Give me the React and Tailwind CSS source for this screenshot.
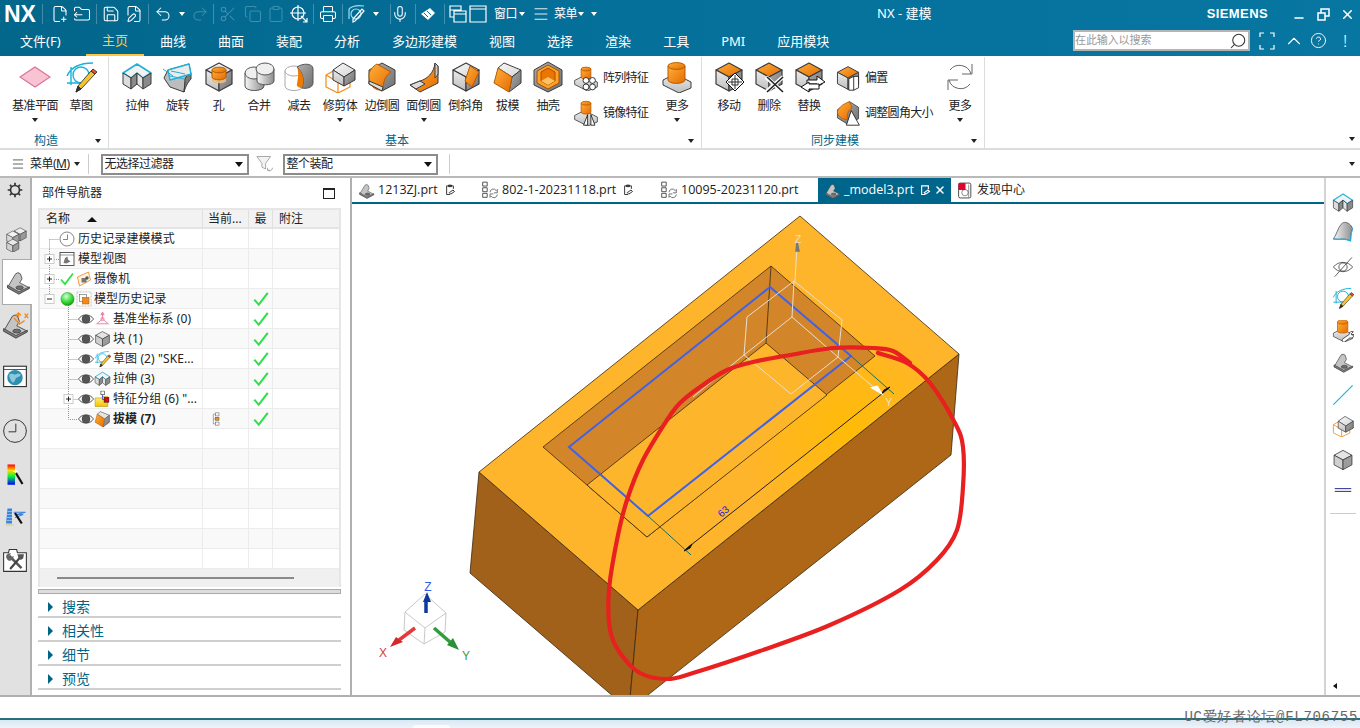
import { FilePlus2, FolderOutput, Save, FilePen, Undo2, Redo2, Scissors, Copy, Clipboard, Printer, Mic, Menu, Search, ChevronUp, CircleHelp, X, Minus } from "lucide-react";

const CJK = "font-['Noto_Sans','Noto_Sans_CJK_SC',sans-serif]";

function Defs() {
  return <svg className="block h-0 w-0">
      <defs>
        <linearGradient id="gt" x1="0" y1="0" x2="1" y2="1"><stop offset="0" stopColor="#fafafa" /><stop offset="1" stopColor="#d4d4d4" /></linearGradient>
        <linearGradient id="gl" x1="0" y1="0" x2="0" y2="1"><stop offset="0" stopColor="#ececec" /><stop offset="1" stopColor="#bdbdbd" /></linearGradient>
        <linearGradient id="gr" x1="0" y1="0" x2="1" y2="1"><stop offset="0" stopColor="#b0b0b0" /><stop offset="1" stopColor="#6f6f6f" /></linearGradient>
        <linearGradient id="og" x1="0" y1="0" x2="1" y2="1"><stop offset="0" stopColor="#ffb03a" /><stop offset="1" stopColor="#e66a00" /></linearGradient>
        <linearGradient id="cy" x1="0" y1="0" x2="1" y2="0"><stop offset="0" stopColor="#f7f7f7" /><stop offset="1" stopColor="#8c8c8c" /></linearGradient>
        <linearGradient id="rb" x1="0" y1="0" x2="0" y2="1"><stop offset="0" stopColor="#f00" /><stop offset=".3" stopColor="#fd0" /><stop offset=".6" stopColor="#0e4" /><stop offset="1" stopColor="#00f" /></linearGradient>
        <radialGradient id="ball" cx=".4" cy=".3" r=".8"><stop offset="0" stopColor="#d4ffd4" /><stop offset=".5" stopColor="#3fe03f" /><stop offset="1" stopColor="#0a8a0a" /></radialGradient>
        <linearGradient id="fold" x1="0" y1="0" x2="0" y2="1"><stop offset="0" stopColor="#fff48a" /><stop offset="1" stopColor="#f5c400" /></linearGradient>
        <radialGradient id="topface" gradientUnits="userSpaceOnUse" cx="850" cy="430" r="110"><stop offset="0" stopColor="#ffbb08" /><stop offset="1" stopColor="#ffb52b" /></radialGradient>
      </defs>
    </svg>;
}

const G = "#3c3c3c";
const cube = (top = "url(#gt)", left = "url(#gl)", right = "url(#gr)") => <g stroke={G} strokeWidth="1.2" strokeLinejoin="round">
    <path d="M3 9 16 2l13 7-13 7z" fill={top} />
    <path d="M3 9l13 7v14L3 23z" fill={left} />
    <path d="M29 9 16 16v14l13-7z" fill={right} />
  </g>;
const cyl = (x, y, w, h, fill = "url(#og)", stroke = "#b85a00") => <g stroke={stroke} strokeWidth="1">
    <path d={`M${x} ${y}v${h}a${w / 2} ${w / 5} 0 0 0 ${w} 0v-${h}z`} fill={fill} />
    <ellipse cx={x + w / 2} cy={y} rx={w / 2} ry={w / 5} fill={fill} />
  </g>;
const plate = <path d="M2 19l12-6 16 8v6l-12 5-16-8z" fill="url(#gl)" stroke={G} />;
const pencil = <g stroke="#222" strokeWidth=".8"><path d="M11 31l2-6L26 10l4 3-14 15z" fill="#f6c431" /><path d="M26 10l2-2 4 3-2 2z" fill="#e8523c" /><path d="M11 31l2-6 3 3z" fill="#333" /></g>;
const sketchBase = <g fill="none" stroke="#18b0dc" strokeWidth="1.4"><path d="M2 15c4-9 14-13 26-13M6 6v18M2 22h18" /><circle cx="16" cy="14" r="8" /></g>;
const extrude = <g stroke={G} strokeLinejoin="round">
    <path d="M2 12 16 3l14 9-8 5-6-5-6 5z" fill="#f2f2f2" stroke="#21b0d8" strokeWidth="1.6" />
    <path d="M2 12l8 5v11l-8-5z" fill="#dcdcdc" />
    <path d="M10 17l6-5v11l-6 5z" fill="#8a8a8a" />
    <path d="M16 12l6 5v11l-6-5z" fill="#e4e4e4" />
    <path d="M22 17l8-5v11l-8 5z" fill="#8a8a8a" />
  </g>;
const bracket = <g stroke="#444" strokeLinejoin="round">
    <path d="M3 23 13 6q3-3 6 0l2 6-3 5 12 6-13 7z" fill="#c4c4c4" />
    <path d="M3 23l14 8 13-7v-2L17 28 3 20z" fill="#7e7e7e" />
    <ellipse cx="18" cy="23" rx="4.5" ry="2.2" fill="#6f6f6f" />
  </g>;

const ICONS = {
  plane: <path d="M1 16 16 6l15 10-15 10z" fill="#f8c4d4" stroke="#dc7396" strokeWidth="1.2" />,
  sketch: <g>{sketchBase}{pencil}</g>,
  extrude,
  revolve: <g stroke={G} strokeLinejoin="round"><path d="M6 9 27 3l2 10-6 8-1 10-14-5-6-9z" fill="#bdbdbd" /><path d="M23 21c-1-4 2-7 6-8v5c-2 2-5 6-7 13z" fill="#7a7a7a" /><path d="M6 9l21-6 2 10-21 6z" fill="#ececec" stroke="#21b0d8" strokeWidth="1.4" /><path d="M1 8l10 7M9 10l14 3M8 15l14 3" stroke="#21b0d8" fill="none" /></g>,
  hole: <g>{cube()}<path d="M9 9v11c0 3 14 3 14 0V9" fill="#e8bd84" opacity=".9" />{cyl(9, 9, 14, 7)}</g>,
  unite: <g stroke="#555"><path d="M2 12v13c0 6 19 6 19 0V12z" fill="url(#cy)" /><ellipse cx="11" cy="12" rx="9" ry="6" fill="#efefef" /><path d="M14 8v12c0 5 17 5 17 0V8z" fill="url(#cy)" /><ellipse cx="22" cy="8" rx="9" ry="6" fill="#efefef" /></g>,
  subtract: <g><path d="M2 10v15c0 6 18 6 18 0V10" fill="#fff" stroke="#aaa" /><ellipse cx="11" cy="10" rx="9" ry="5" fill="#fff" stroke="#aaa" /><path d="M14 6c6-4 16-4 16 2v14c0 5-8 6-11 5 2-6 2-15-5-21z" fill="url(#gr)" stroke="#555" /><path d="M14 6c7 6 7 15 5 21-3 0-6-2-5-4 1-6 2-12 0-17z" fill="#f07a00" /></g>,
  trim: <g><path d="M2 14 13 8M2 14 14 21 26 14M2 14V26L14 32 26 26V14M14 21V32" fill="none" stroke="#f08a1c" strokeWidth="1.2" /><path d="M19 2 31 9 20 16 9 9z" fill="url(#gt)" stroke={G} /><path d="M9 9l11 7v9L9 19z" fill="url(#gl)" stroke={G} /><path d="M31 9v10l-11 6v-9z" fill="url(#gr)" stroke={G} /></g>,
  eblend: <g><path d="M16 2 29 9v14l-13 7L3 23V9z" fill="url(#gr)" stroke={G} /><path d="M3 14c0-4 4-9 8-11l14 8c-5 3-8 9-8 18-8 1-14-4-14-15z" fill="url(#og)" stroke="#b85a00" /><path d="M3 23l13 7 1-4-14-6z" fill="#ddd" stroke={G} /></g>,
  fblend: <g stroke={G}><path d="M27 2l3 3v17L12 31 2 24l10-4c7-2 14-8 15-18z" fill="url(#og)" /><path d="M2 24l10-4 5 3-9 5z" fill="#ddd" /><path d="M27 2l3 3v8c-1 2-2 3-3 4z" fill="#ccc" /></g>,
  chamfer: <g>{cube()}<path d="M20 5l9 6-7 15-7-6z" fill="url(#og)" stroke="#b85a00" /></g>,
  draft: <g stroke={G} strokeLinejoin="round"><path d="M12 2 29 9l-9 7L6 7z" fill="url(#gt)" /><path d="M29 9v13l-12 9 3-15z" fill="url(#gr)" /><path d="M6 7l14 9-3 15L2 22z" fill="url(#og)" stroke="#b85a00" /></g>,
  shell: <g><path d="M16 1 30 9v15l-14 7L2 24V9z" fill="url(#gr)" stroke={G} /><path d="M16 4 27 10v12l-11 6-11-6V10z" fill="#ffa127" stroke="#a85000" /><path d="M9 20V11l7-4 7 4v9l-7 4z" fill="#ec7400" stroke="#a85000" /><path d="M9 20l7-4 7 4-7 4z" fill="#ffc265" /></g>,
  pattern: <g>{plate}{cyl(10, 5, 12, 10)}<g fill="#fff" stroke="#111"><circle cx="16" cy="19" r="3.6" /><circle cx="24" cy="19" r="3.6" /><circle cx="16" cy="27" r="3.6" /><circle cx="24" cy="27" r="3.6" /></g></g>,
  mirror: <g>{plate}{cyl(10, 4, 12, 11)}<g fill="#fff" stroke="#111"><path d="M13 31l5-13v13zM27 31l-5-13v13z" /></g></g>,
  more: <g>{plate}{cyl(7, 5, 17, 14)}</g>,
  moveop: <g>{cube("url(#og)")}<path d="M22 12l9 9-9 9-9-9z" fill="#fff" stroke="#111" /><path d="M19 18h6v6h-6z M22 14v14M15 21h14" fill="none" stroke="#333" /></g>,
  del: <g>{cube("url(#og)")}<path d="M13 16l17 15M30 16 13 31" stroke="#fff" strokeWidth="4" /><path d="M14 16l16 15M30 16 14 31" stroke="#222" strokeWidth="1.6" /></g>,
  replace: <g>{cube("url(#og)")}<path d="M14 19h10v-4l8 6-8 4v-2H14z" fill="#fff" stroke="#111" /><path d="M26 23H16v-2l-8 5 8 5v-3h10z" fill="#fff" stroke="#111" /></g>,
  offset: <g>{cube("url(#og)")}<path d="M17 17l6-3h6v14l-6 3h-6z" fill="#fff" stroke="#111" /><path d="M23 14v17" stroke="#111" /></g>,
  resize: <g><path d="M18 2 29 9v14l-13 7L3 22V12z" fill="url(#gr)" stroke={G} /><path d="M3 14c2-6 9-10 15-12l3 8c-5 2-6 8-6 14-5 0-12-3-12-10z" fill="url(#og)" stroke="#b85a00" /><path d="M20 13l10 18H14z" fill="#fff" stroke="#111" /></g>,
  refresh: <g fill="none" stroke="#666" strokeWidth="1"><path d="M27 13A12 12 0 0 0 6 9M5 19a12 12 0 0 0 21 4" /><path d="M28 3v10H18M4 29V19h10" /></g>,
  gear: <g fill="none" stroke="#333" strokeWidth="3"><circle cx="16" cy="16" r="8" /><path d="M16 3v5M16 24v5M3 16h5M24 16h5M7 7l3 3M22 22l3 3M7 25l3-3M22 10l3-3" /></g>,
  parts: <g><g transform="translate(13 1) scale(.58)">{cube("#ededed", "#d2d2d2", "#9a9a9a")}</g><g transform="translate(4 5) scale(.58)">{cube("#f2f2f2", "#d8d8d8", "#9f9f9f")}</g><g transform="translate(4 15) scale(.58)">{cube("#e8e8e8", "#d2d2d2", "#9a9a9a")}</g></g>,
  bracket,
  constraint: <g>{bracket}<path d="M15 8l6 7 6-4M18 5l5-1M27 3l4 5M31 3l-4 5M20 2v6M17 5l3-3 3 3" stroke="#f08a1c" strokeWidth="1.4" fill="none" /></g>,
  web: <g><rect x="2" y="4" width="28" height="25" fill="#fff" stroke="#333" strokeWidth="1.4" /><path d="M2 8h28" stroke="#333" /><circle cx="16" cy="18" r="9.5" fill="#2f8fb2" /><path d="M9 14c3-2 6 1 8 0s3-2 6 0c0 3-5 3-6 5s-2 5-4 5c-2-3-5-7-4-10z" fill="#8cc7da" /></g>,
  clock: <g fill="none" stroke="#333" strokeWidth="1.2"><circle cx="16" cy="16" r="14" /><path d="M17 7v10H8" /></g>,
  palette: <g><rect x="6" y="2" width="10" height="27" fill="url(#rb)" /><path d="M17 13l9 15" stroke="#111" strokeWidth="3" /><path d="M17 7l1 3 3 1-3 1-1 3-1-3-3-1 3-1z" fill="#fff" /></g>,
  wave: <g><path d="M6 6h6v20H4z" fill="#3c84dc" /><path d="M6 10h6M5 14h7M5 18h7M5 22h7" stroke="#a9ccf2" /><path d="M14 11h16l-12 3h9l-11 4" fill="none" stroke="#3c84dc" strokeWidth="1.5" /><path d="M16 12l9 14" stroke="#111" strokeWidth="3" /><path d="M4 28h10" stroke="#e0c030" strokeWidth="1.5" strokeDasharray="2 1" /></g>,
  tools: <g><path d="M2 7h6l1-4h9l1 4h11v23H2z" fill="#fff" stroke="#333" strokeWidth="1.3" /><path d="M9 11l15 15" stroke="#555" strokeWidth="3.2" /><path d="M10 27l13-15" stroke="#444" strokeWidth="2.6" /><path d="M5 11c1-3 4-4 6-3l-2 3 2 2 3-2c1 2-1 5-4 6-3 0-5-3-5-6z" fill="#666" /><path d="M19 9h8l-1 5-3 2-3-3z" fill="#555" /></g>,
  eye: <g stroke="#333"><path d="M1 16c7-11 23-11 30 0-7 11-23 11-30 0z" fill="#fff" strokeWidth="1.6" /><circle cx="16" cy="16" r="8" fill="#555" /></g>,
  check: <path d="M4 17l8 9L28 5" fill="none" stroke="#2ee04a" strokeWidth="3.6" />,
  ball: <circle cx="16" cy="16" r="14" fill="url(#ball)" stroke="#1a8a1a" />,
  viewfolder: <g><rect x="2" y="3" width="28" height="26" fill="#fff" stroke="#333" strokeWidth="1.6" /><path d="M2 8h28" stroke="#333" /><path d="M9 24l3-10 5-3 1 6 5 4-8 4z" fill="#777" /></g>,
  camera: <g><path d="M3 12 25 2l4 16-22 12z" fill="#fff3e0" stroke="#ee7a10" strokeWidth="1.5" /><path d="M11 14h10v9H11z" fill="#777" /><circle cx="22" cy="14" r="3.5" fill="#555" /></g>,
  hist: <g><rect x="2" y="2" width="28" height="28" fill="#fff" stroke="#888" strokeDasharray="2 1" /><rect x="7" y="7" width="14" height="14" fill="#fff" stroke="#444" /><rect x="13" y="13" width="13" height="13" fill="#f08a1c" stroke="#a85000" /></g>,
  datum: <g fill="none" stroke="#e6849f" strokeWidth="1.8"><path d="M16 3v13l-11 9M16 16l11 9M5 25h22" /><path d="M16 3l-3 5h6z" fill="#e6849f" /><circle cx="16" cy="16" r="3" /></g>,
  block: cube("#e4e4e4", "#cfcfcf", "#9c9c9c"),
  group: <g><path d="M2 14h12l3-3h9v19H2z" fill="url(#fold)" stroke="#a58a00" /><rect x="13" y="1" width="7" height="7" fill="#fff" stroke="#111" /><path d="M16 8v9h4" stroke="#1c3fd8" fill="none" strokeWidth="1.4" /><rect x="19" y="13" width="9" height="9" fill="#e5001a" stroke="#111" /></g>,
  draftFeat: <g stroke={G} strokeLinejoin="round"><path d="M12 2 29 9l-9 7L6 7z" fill="#e5e5e5" /><path d="M29 9v13l-12 9 3-15z" fill="url(#gr)" /><path d="M6 7l14 9-3 15L2 22z" fill="url(#og)" stroke="#b85a00" /></g>,
  treeSmall: <g fill="none" stroke="#444"><rect x="8" y="2" width="8" height="7" /><rect x="8" y="12" width="8" height="7" fill="#f08a1c" /><rect x="8" y="23" width="8" height="7" /><path d="M8 5H3v22h5M3 16h5" /></g>,
  surface: <g><path d="M2 26C8 18 10 3 18 2c6 0 9 3 12 9-2 5-3 9-3 18-9-5-17-1-25-3z" fill="url(#cy)" stroke={G} /><path d="M2 26c8 2 16-2 25 3 0-9 1-13 3-18" fill="none" stroke="#1cb3dd" strokeWidth="1.6" /></g>,
  hidden: <g fill="none" stroke="#444" strokeWidth="1.2"><path d="M2 16c7-9 21-9 28 0-7 9-21 9-28 0z" /><circle cx="16" cy="16" r="6" /><path d="M4 30 29 2" /></g>,
  wrench: <g>{plate}{cyl(8, 3, 15, 13)}<path d="M15 28l10-7c0-4 3-5 6-4l-3 3 1 2 3-1c0 4-3 6-6 5l-8 6c-2 1-4-2-3-4z" fill="#fff" stroke="#111" /></g>,
  line: <path d="M2 30 30 2" stroke="#15b4d8" strokeWidth="1.5" />,
  dash: <g stroke="#12127c"><path d="M4 14h24M4 18h24" strokeWidth="1.3" /></g>,
  filter: <g fill="none" stroke="#999" strokeWidth="1.3"><path d="M3 4h22l-8 11v9l-6-3v-6z" fill="#f2f2f2" /><path d="M20 26a5 5 0 0 0 8-4M20 22v4h4" /></g>,
  sync: <g fill="none" stroke="#444" strokeWidth="1.6"><path d="M3 2h8v7H3zM3 12h8v7H3zM3 22h8v7H3z" /><path d="M16 20a6 6 0 0 1 11-3l2-2v6h-6M29 24a6 6 0 0 1-11 3l-2 2v-6h6" stroke="#666" /></g>,
  doc: <g fill="none" stroke="#333" strokeWidth="2.6"><path d="M25 13V5H7v23h9" /><path d="M12 3h8v4h-8z" fill="#333" /><path d="M14 23l10-7 4 4-10 7z" fill="#fff" /></g>,
  discover: <g><rect x="3" y="2" width="23" height="28" rx="3" fill="#fff" stroke="#333" strokeWidth="1.6" /><rect x="3" y="2" width="13" height="13" fill="#e8002c" /><circle cx="15" cy="20" r="6" fill="none" stroke="#333" /><path d="M22 5v24" stroke="#333" /></g>,
};

function Icon({ n, s = 32, x, y, className }) {
  return <svg x={x} y={y} width={s} height={s} viewBox="0 0 32 32" className={className}>{ICONS[n]}</svg>;
}

function Caret({ className = "border-t-[#222]" }) {
  return <span className={`block h-0 w-0 border-x-[3px] border-t-[4px] border-x-transparent ${className}`} />;
}

function Tool({ icon, label, caret, className }) {
  return <div className={`flex shrink-0 flex-col items-center ${className}`}>
      <div className="flex h-[33px] items-center"><Icon n={icon} /></div>
      <span className="mt-[5px] whitespace-nowrap text-[12px] leading-[16px] tracking-[-0.5px] text-[#222]">{label}</span>
      {caret && <span className="mt-[4px]"><Caret /></span>}
    </div>;
}

function SmallTool({ icon, label, className }) {
  return <div className={`flex items-center ${className}`}>
      <Icon n={icon} s={26} />
      <span className="ml-[4px] whitespace-nowrap text-[12px] tracking-[-0.7px] text-[#222]">{label}</span>
    </div>;
}

function Group({ label, className, children }) {
  return <div className={`flex shrink-0 flex-col border-r border-[#dcdcdc] ${className}`}>
      <div className="flex h-[75px] items-start pt-[3px]">{children}</div>
      <div className="flex h-[16px] items-center pt-[2px]">
        <span className="flex-1 text-center text-[12px] text-[#00658a]">{label}</span>
        <span className="flex w-[16px] justify-start pl-[3px]"><Caret /></span>
      </div>
    </div>;
}

function TitleBar() {
  const d = "h-[20px] w-px bg-white/25";
  const ic = "shrink-0 text-white";
  const dim = "shrink-0 text-[#3f8fae]";
  return <div className="flex h-[28px] items-center text-white">
      <span className="ml-[4px] w-[33px] font-['Liberation_Sans',sans-serif] text-[23px] leading-none font-bold">NX</span>
      <span className={`ml-[5px] ${d}`} />
      <FilePlus2 size={18} strokeWidth={1.4} className={`ml-[8px] ${ic}`} />
      <FolderOutput size={18} strokeWidth={1.4} className={`ml-[4px] ${ic}`} />
      <span className={`ml-[5px] ${d}`} />
      <Save size={18} strokeWidth={1.4} className={`ml-[5px] ${ic}`} />
      <FilePen size={18} strokeWidth={1.4} className={`ml-[5px] ${ic}`} />
      <span className={`ml-[5px] ${d}`} />
      <Undo2 size={18} strokeWidth={1.4} className={`ml-[5px] ${ic}`} />
      <span className="ml-[7px]"><Caret className="border-t-white" /></span>
      <Redo2 size={18} strokeWidth={1.4} className={`ml-[6px] ${dim}`} />
      <span className={`ml-[4px] ${d}`} />
      <Scissors size={18} strokeWidth={1.4} className={`ml-[5px] ${dim}`} />
      <Copy size={18} strokeWidth={1.4} className={`ml-[7px] ${dim}`} />
      <Clipboard size={18} strokeWidth={1.4} className={`ml-[5px] ${dim}`} />
      <svg width="18" height="18" viewBox="0 0 18 18" fill="none" stroke="currentColor" strokeWidth="1.2" className={`ml-[5px] ${ic}`}><circle cx="8" cy="8" r="6" /><path d="M8 0v16M0 8h16M11 11l6 6M13 17h4v-4" /></svg>
      <span className={`ml-[5px] ${d}`} />
      <Printer size={18} strokeWidth={1.4} className={`ml-[5px] ${ic}`} />
      <span className={`ml-[5px] ${d}`} />
      <svg width="18" height="18" viewBox="0 0 18 18" fill="none" stroke="currentColor" strokeWidth="1.2" className="ml-[5px] text-[#9fdcf0]"><path d="M1 14V4M1 4c3-3 8-4 15-3" /><circle cx="8" cy="9" r="5" /><path d="M5 17l2-1 9-10-2-2-9 10z" stroke="#fff" /></svg>
      <span className="ml-[7px]"><Caret className="border-t-white" /></span>
      <span className={`ml-[11px] ${d}`} />
      <Mic size={18} strokeWidth={1.4} className={ic} />
      <span className={`ml-[6px] ${d}`} />
      <svg width="18" height="18" viewBox="0 0 18 18" className="ml-[3px]"><path d="M2 9 11 3l5 5-7 7z" fill="#fff" /><path d="M5 8l4 4M8 6l4 4" stroke="#05759f" /></svg>
      <span className={`ml-[7px] ${d}`} />
      <svg width="18" height="18" viewBox="0 0 18 18" fill="none" stroke="#fff" strokeWidth="1.2" className="ml-[4px]"><path d="M1 1h11v4H1zM1 5v7h4M5 6h12v11H5zM5 9h12" /></svg>
      <svg width="18" height="18" viewBox="0 0 18 18" fill="none" stroke="#fff" strokeWidth="1.2" className="ml-[2px]"><path d="M1 1h16v16H1zM1 4h16" /></svg>
      <span className="ml-[7px] text-[12px] tracking-[-0.5px]">窗口</span>
      <span className="ml-[2px]"><Caret className="border-t-white" /></span>
      <Menu size={18} strokeWidth={1.2} className={`ml-[7px] ${ic}`} />
      <span className="ml-[4px] text-[12px] tracking-[-0.5px]">菜单</span>
      <span className="ml-[1px]"><Caret className="border-t-white" /></span>
      <span className="ml-[7px]"><Caret className="border-t-white" /></span>
      <span className="ml-[280px] text-[13px] whitespace-nowrap">NX - 建模</span>
      <span className="ml-auto font-['Liberation_Sans',sans-serif] text-[13px] font-bold tracking-[0.4px]">SIEMENS</span>
      <Minus size={14} strokeWidth={2.4} className="mt-[8px] ml-[24px]" />
      <svg width="13" height="13" viewBox="0 0 13 13" fill="none" stroke="#fff" strokeWidth="1.5" className="ml-[11px]"><path d="M1 5h7v7H1zM4 5V1h8v7H8" /></svg>
      <X size={15} strokeWidth={2.4} className="mr-[5px] ml-[10px]" />
    </div>;
}

function RibbonTabs() {
  const tabs = ["曲线", "曲面", "装配", "分析", "多边形建模", "视图", "选择", "渲染", "工具", "PMI", "应用模块"];
  return <div className="flex h-[28px] items-stretch text-[13px] text-white">
      <span className="flex w-[86px] items-center pl-[20px]">文件(F)</span>
      <span className="flex w-[58px] items-center justify-center border-b-[2px] border-[#fdc741] text-[#ffc83d]">主页</span>
      {tabs.map((t) => <span key={t} className="flex items-center px-[16px] whitespace-nowrap">{t}</span>)}
      <div className="mt-[2px] ml-auto flex h-[21px] w-[177px] items-center justify-between border-2 border-[#b4b4b4] bg-white pr-[1px] text-[11px] tracking-[-0.1px] text-[#999]">
        在此输入以搜索
        <Search size={18} strokeWidth={1.4} className="-scale-x-100 text-[#333]" />
      </div>
      <div className="flex w-[110px] items-center pb-[3px]">
        <svg width="16" height="18" viewBox="0 0 16 18" fill="none" stroke="#fff" strokeWidth="1.2" className="ml-[9px]"><path d="M1 5V1h4M11 1h4v4M1 13v4h4M11 17h4v-4" /></svg>
        <ChevronUp size={22} strokeWidth={1.2} className="ml-[8px]" />
        <CircleHelp size={17} strokeWidth={1.3} className="ml-[5px]" />
        <span className="ml-[16px] text-[17px] leading-none font-light">!</span>
      </div>
    </div>;
}

function Ribbon() {
  return <div className="flex h-[94px] border-b-2 border-[#dcdcdc] bg-white pt-[1px]">
      <Group label="构造" className="w-[109px]">
        <Tool icon="plane" label="基准平面" caret className="ml-[12px] w-[46px]" />
        <Tool icon="sketch" label="草图" className="w-[46px]" />
      </Group>
      <Group label="基本" className="w-[593px]">
        <Tool icon="extrude" label="拉伸" className="ml-[8px] w-[40px]" />
        <Tool icon="revolve" label="旋转" className="w-[41px]" />
        <Tool icon="hole" label="孔" className="w-[41px]" />
        <Tool icon="unite" label="合并" className="w-[40px]" />
        <Tool icon="subtract" label="减去" className="w-[40px]" />
        <Tool icon="trim" label="修剪体" caret className="w-[42px]" />
        <Tool icon="eblend" label="边倒圆" className="w-[42px]" />
        <Tool icon="fblend" label="面倒圆" caret className="w-[41px]" />
        <Tool icon="chamfer" label="倒斜角" className="w-[43px]" />
        <Tool icon="draft" label="拔模" className="w-[41px]" />
        <Tool icon="shell" label="抽壳" className="w-[40px]" />
        <div className="ml-[5px] flex w-[84px] shrink-0 flex-col gap-[9px] pt-[5px]">
          <SmallTool icon="pattern" label="阵列特征" />
          <SmallTool icon="mirror" label="镜像特征" />
        </div>
        <Tool icon="more" label="更多" caret className="w-[40px]" />
      </Group>
      <Group label="同步建模" className="w-[283px]">
        <Tool icon="moveop" label="移动" className="ml-[7px] w-[40px]" />
        <Tool icon="del" label="删除" className="w-[40px]" />
        <Tool icon="replace" label="替换" className="w-[40px]" />
        <div className="ml-[6px] flex w-[105px] shrink-0 flex-col gap-[9px] pt-[5px]">
          <SmallTool icon="offset" label="偏置" />
          <SmallTool icon="resize" label="调整圆角大小" />
        </div>
        <Tool icon="refresh" label="更多" caret className="w-[40px]" />
      </Group>
      <div className="flex flex-1 items-end justify-end pr-[5px] pb-[7px]"><Caret /></div>
    </div>;
}

function Select({ label, className }) {
  return <div className={`flex h-[21px] items-center justify-between border-2 border-[#8c8c8c] bg-white pr-[4px] pl-[2px] text-[12px] tracking-[-0.5px] ${className}`}>
      {label}
      <span className="block h-0 w-0 border-x-[4px] border-t-[5px] border-x-transparent border-t-[#111]" />
    </div>;
}

function SelectionBar() {
  return <div className="flex h-[28px] items-center border-b-2 border-[#b9b9b9] bg-white pt-[2px] text-[#222]">
      <Menu size={14} strokeWidth={1.2} className="ml-[11px]" />
      <span className="ml-[5px] text-[12px] tracking-[-0.5px]">菜单(<u>M</u>)</span>
      <span className="ml-[4px]"><Caret /></span>
      <span className="ml-[8px] h-[20px] w-px bg-[#ccc]" />
      <Select label="无选择过滤器" className="ml-[12px] w-[148px]" />
      <Icon n="filter" s={20} className="ml-[6px]" />
      <Select label="整个装配" className="ml-[8px] w-[155px]" />
      <span className="ml-[11px] h-[20px] w-px bg-[#ccc]" />
      <span className="mr-[5px] ml-auto"><Caret /></span>
    </div>;
}

function LeftRail() {
  const items = [["gear", 18, "h-[24px] pt-[3px]"], ["parts", 26, "h-[57px] pt-[24px]"]];
  return <div className="flex w-[32px] shrink-0 flex-col border-r-2 border-[#b0b0b0] bg-[#e1e1e1]">
      {items.map(([n, s, c]) => <div key={n} className={`flex justify-center ${c}`}><Icon n={n} s={s} /></div>)}
      <div className="-mr-[2px] ml-[2px] flex h-[46px] items-center justify-center border-y border-l border-[#aaa] bg-white"><Icon n="bracket" s={26} /></div>
      <div className="mt-[3px] flex h-[38px] justify-center pt-[3px]"><Icon n="constraint" s={28} /></div>
      <div className="mt-[17px] flex justify-center"><Icon n="web" s={26} /></div>
      <div className="mt-[29px] flex justify-center"><Icon n="clock" s={26} /></div>
      <div className="mt-[19px] flex justify-center"><Icon n="palette" s={24} /></div>
      <div className="mt-[17px] flex justify-center"><Icon n="wave" s={24} /></div>
      <div className="mt-[19px] flex justify-center"><Icon n="tools" s={26} /></div>
    </div>;
}

// connector pieces are drawn per row so the tree stays in normal flow
const dot = { stroke: "#999", strokeDasharray: "1 1", fill: "none" };
function Expander({ x, minus }) {
  return <g>
      <rect x={x - 4.5} y="5.5" width="9" height="9" fill="#fff" stroke="#ccc" />
      <path d={minus ? `M${x - 2.5} 10h5` : `M${x - 2.5} 10h5M${x} 7.5v5`} stroke="#222" />
    </g>;
}

function Row({ i, name, bold, check, children, w }) {
  return <div className={`grid h-[20px] grid-cols-[163px_46px_24px_1fr] border-b border-[#ececec] ${i % 2 ? "bg-[#f9f9f9]" : "bg-white"}`}>
      <div className="flex items-center border-r border-[#ececec]">
        {children && <svg width={w} height="20" className="shrink-0">{children}</svg>}
        {name && <span className={`truncate text-[12px] tracking-[0.1px] text-[#222] ${bold ? "font-bold" : ""}`}>{name}</span>}
      </div>
      <div className="flex items-center justify-center border-r border-[#ececec] pr-[14px]">{bold && <Icon n="treeSmall" s={14} />}</div>
      <div className="flex items-center justify-center border-r border-[#ececec]">{check && <Icon n="check" s={18} />}</div>
      <div />
    </div>;
}

function Child({ i, name, icon, bold, exp, last }) {
  return <Row i={i} name={name} bold={bold} check w={73}>
      <path d={last ? "M28.5 0v10.5H38" : "M28.5 0v20M28.5 10.5H38"} {...dot} />
      {exp && <Expander x={28.5} />}
      <Icon n="eye" s={16} x={38} y={2} />
      <Icon n={icon} s={17} x={54} y={1.5} />
    </Row>;
}

function Navigator() {
  const empty = [10, 11, 12, 13, 14, 15, 16];
  return <div className="flex w-[320px] shrink-0 flex-col border-r-2 border-[#b0b0b0] bg-white">
      <div className="flex h-[30px] items-center justify-between pr-[15px] pl-[10px] text-[12px] text-[#222]">
        部件导航器
        <span className="h-[11px] w-[12px] border border-t-2 border-[#222]" />
      </div>
      <div className="mr-[9px] ml-[6px] border-x-2 border-t-2 border-[#e6e6e6]">
        <div className="grid h-[19px] grid-cols-[163px_46px_24px_1fr] border-b-2 border-[#e4e4e4] bg-[#f2f2f2] text-[12px] text-[#222]">
          <div className="flex items-center border-r border-[#e0e0e0] pl-[6px]">名称<span className="ml-[17px] block h-0 w-0 border-x-[5px] border-b-[5px] border-x-transparent border-b-[#111]" /></div>
          <div className="flex items-center border-r border-[#e0e0e0] pl-[5px]">当前...</div>
          <div className="flex items-center justify-center border-r border-[#e0e0e0]">最</div>
          <div className="flex items-center pl-[6px]">附注</div>
        </div>
        <Row i={0} name="历史记录建模模式" w={38}>
          <path d="M9.5 10.5v10M9.5 10.5H19" {...dot} />
          <Icon n="clock" s={16} x={19} y={2} />
        </Row>
        <Row i={1} name="模型视图" w={38}>
          <path d="M9.5 0v20M14 10.5h5" {...dot} />
          <Expander x={9.5} />
          <Icon n="viewfolder" s={16} x={19} y={2} />
        </Row>
        <Row i={2} name="摄像机" w={54}>
          <path d="M9.5 0v20M14 10.5h5" {...dot} />
          <Expander x={9.5} />
          <Icon n="check" s={16} x={19} y={2} />
          <Icon n="camera" s={16} x={36} y={2} />
        </Row>
        <Row i={3} name="模型历史记录" check w={54}>
          <path d="M9.5 0v6M28.5 16v4" {...dot} />
          <Expander x={9.5} minus />
          <Icon n="ball" s={15} x={20} y={2.5} />
          <Icon n="hist" s={16} x={36} y={2} />
        </Row>
        <Child i={4} name="基准坐标系 (0)" icon="datum" />
        <Child i={5} name="块 (1)" icon="block" />
        <Child i={6} name='草图 (2) "SKE...' icon="sketch" />
        <Child i={7} name="拉伸 (3)" icon="extrude" />
        <Child i={8} name='特征分组 (6) "...' icon="group" exp />
        <Child i={9} name="拔模 (7)" icon="draftFeat" bold last />
        {empty.map((i) => <Row key={i} i={i} />)}
        <div className="flex h-[18px] items-center bg-[#f0f0f0] pr-[45px] pl-[17px]"><span className="h-[2px] w-full bg-[#8a8a8a]" /></div>
      </div>
      <div className="mt-[2px] mr-[9px] ml-[6px] h-[5px] border border-[#aaa] bg-[#ddd]" />
      {["搜索", "相关性", "细节", "预览"].map((t) => <div key={t} className="mr-[9px] ml-[6px] flex h-[24px] items-center border-b-2 border-[#cfcfcf] pt-[3px] text-[14px] text-[#006487]">
          <span className="ml-[10px] block h-0 w-0 border-y-[5px] border-l-[5px] border-y-transparent border-l-[#006487]" />
          <span className="ml-[9px]">{t}</span>
        </div>)}
    </div>;
}

function FileTab({ icon, label, doc, className }) {
  return <div className={`flex items-center font-['Open_Sans','Noto_Sans_CJK_SC',sans-serif] text-[12.5px] whitespace-nowrap text-[#222] ${className}`}>
      <Icon n={icon} s={icon === "sync" ? 18 : 17} />
      <span className="ml-[3px]">{label}</span>
      {doc && <Icon n="doc" s={12} className="ml-[6px]" />}
    </div>;
}

function smooth(pts) {
  let d = `M${pts[0][0]} ${pts[0][1]}`;
  for (let i = 0; i < pts.length - 1; i++) {
    const p0 = pts[Math.max(i - 1, 0)], p1 = pts[i], p2 = pts[i + 1], p3 = pts[Math.min(i + 2, pts.length - 1)];
    d += `C${p1[0] + (p2[0] - p0[0]) / 6} ${p1[1] + (p2[1] - p0[1]) / 6} ${p2[0] - (p3[0] - p1[0]) / 6} ${p2[1] - (p3[1] - p1[1]) / 6} ${p2[0]} ${p2[1]}`;
  }
  return d;
}

const SCRIBBLE = [[910, 363], [893, 351], [873, 348], [833, 348], [790, 355], [753, 362], [727, 370], [700, 387], [680, 403], [667, 420], [643, 460], [627, 500], [617, 540], [609, 590], [610, 630], [620, 653], [640, 673], [667, 679], [693, 673], [760, 651], [830, 625], [900, 590], [937, 560], [957, 530], [963, 487], [963, 447], [955, 423], [930, 383], [907, 363], [878, 353]];

function Model() {
  const ghost = "M794 281 747 317 744 355 791 394 838 357 842 320zM794 281 792 317 744 355M792 317 838 357M795 281 797 246M838 357 877 390M744 355 693 397";
  return <svg viewBox="352 204 972 491" className="block h-full w-full bg-white">
      <g stroke="#3a2a10" strokeWidth=".8" strokeLinejoin="round">
        <path d="M479 472 638 610 629 710 470 573z" fill="#a2611a" />
        <path d="M638 610 959 354 951 455 629 710z" fill="#ad6717" />
        <path d="M800 216 959 354 638 610 479 472z" fill="url(#topface)" />
        <path d="M771 266 875 356 647 537 543 447z" fill="#d3852a" />
        <path d="M766 343 827 395 647 537 587 485z" fill="#fdb52c" />
        <path d="M771 266 766 343" fill="none" />
      </g>
      <path d="M770 287 851 356 648 516 569 447z" fill="none" stroke="#3f62e6" strokeWidth="2" />
      <path d="M648 516 691 555M851 356 894 394" stroke="#0d6f6a" />
      <path d="M686 549 888 389" stroke="#222" />
      <path d="M684 551 692 544 690 548zM890 387 882 393 884 390z" fill="#111" stroke="#111" />
      <text x="723" y="515" transform="rotate(-42 723 511)" textAnchor="middle" fontSize="10" fill="#1c1cdc" fontFamily="Liberation Sans">63</text>
      <path d={ghost} fill="none" stroke="#e6dfd2" strokeWidth="1" />
      <path d="M796 251 797 242 799 251z" fill="#777" stroke="#777" strokeWidth="1.5" />
      <path d="M873 388 880 392 877 387z" fill="#fff" stroke="#fff" strokeWidth="2.5" />
      <text x="798" y="243" textAnchor="middle" fontSize="11" fill="#e6dfd2" fontFamily="Liberation Sans">Z</text>
      <text x="889" y="406" textAnchor="middle" fontSize="11" fill="#e6dfd2" fontFamily="Liberation Sans">Y</text>
      <path d={smooth(SCRIBBLE)} fill="none" stroke="#e8201f" strokeWidth="4.2" strokeLinecap="round" strokeLinejoin="round" />
      <path d="M425 594 405 612 404 630 424 644 445 632 446 613zM405 612 425 628 446 613M425 628 424 644" fill="#fff" stroke="#c8c8c8" strokeWidth="1" />
      <path d="M426 613V600" stroke="#0a3a9c" strokeWidth="3.5" />
      <path d="M423 602 427 592 431 602z" fill="#0a3a9c" />
      <path d="M415 628 399 640" stroke="#e23b3b" strokeWidth="3.5" />
      <path d="M396 637 390 647 403 642z" fill="#d42a2a" />
      <path d="M434 628 450 642" stroke="#2e9e3c" strokeWidth="3.5" />
      <path d="M447 645 459 650 453 638z" fill="#2a8f38" />
      <text x="428" y="591" textAnchor="middle" fontSize="12" fill="#2c5ce8" fontFamily="Liberation Sans">Z</text>
      <text x="383" y="657" textAnchor="middle" fontSize="12" fill="#d83a3a" fontFamily="Liberation Sans">X</text>
      <text x="466" y="660" textAnchor="middle" fontSize="12" fill="#3a9a48" fontFamily="Liberation Sans">Y</text>
    </svg>;
}

function RightRail() {
  const items = [["extrude", "mt-[14px]"], ["surface", "mt-[7px]"], ["hidden", "mt-[13px]"], ["sketch", "mt-[9px]"], ["wrench", "mt-[11px]"], ["bracket", "mt-[9px]"], ["line", "mt-[11px]"], ["trim", "mt-[9px]"], ["block", "mt-[12px]"], ["dash", "mt-[8px]"]];
  return <div className="flex w-[36px] shrink-0 flex-col items-center border-l-2 border-[#d4d4d4] bg-white">
      {items.map(([n, m]) => <Icon key={n} n={n} s={22} className={`shrink-0 ${m}`} />)}
      <span className="mt-[12px] h-px w-[26px] shrink-0 bg-[#ccc]" />
      <span className="mt-auto mr-[16px] mb-[6px] block h-0 w-0 border-y-[3px] border-r-[4px] border-y-transparent border-r-[#111]" />
    </div>;
}

export default function App() {
  return <div className={`relative flex h-[728px] w-[1360px] flex-col overflow-hidden bg-white ${CJK}`}>
      <Defs />
      <div className="bg-linear-to-r from-[#03668b] via-[#05719b] to-[#0776a1]">
        <TitleBar />
        <RibbonTabs />
      </div>
      <Ribbon />
      <SelectionBar />
      <div className="flex h-[519px] shrink-0 border-b-2 border-[#b0b0b0]">
        <LeftRail />
        <Navigator />
        <div className="flex min-w-0 flex-1 flex-col">
          <div className="flex h-[26px] shrink-0 items-stretch border-b-[2px] border-[#00658a] bg-white pl-[6px]">
            <FileTab icon="bracket" label="1213ZJ.prt" doc className="w-[123px]" />
            <FileTab icon="sync" label="802-1-20231118.prt" doc className="w-[179px]" />
            <FileTab icon="sync" label="10095-20231120.prt" className="w-[158px]" />
            <div className="flex w-[133px] items-center bg-[#00658a] pl-[6px] font-['Open_Sans',sans-serif] text-[12.5px] text-white">
              <Icon n="bracket" s={17} />
              <span className="ml-[3px]">_model3.prt</span>
              <svg width="12" height="12" viewBox="0 0 32 32" fill="none" stroke="#fff" strokeWidth="3" className="ml-[5px]"><path d="M25 13V5H7v23h9M14 23l10-7 4 4-10 7z" /></svg>
              <X size={12} strokeWidth={3} className="ml-[3px]" />
            </div>
            <div className="ml-[6px] flex items-center text-[12px] text-[#222]">
              <Icon n="discover" s={17} />
              <span className="ml-[3px]">发现中心</span>
            </div>
          </div>
          <div className="min-h-0 flex-1"><Model /></div>
        </div>
        <RightRail />
      </div>
      <div className="h-[21px] bg-white" />
      <div className="flex flex-1 items-end border-t-2 border-[#2b6d7d] bg-linear-to-b from-[#d9e8f4] to-[#eef4fa]">
        <span className="ml-[413px] h-[3px] w-[37px] rounded-t-[3px] bg-white/80" />
      </div>
      <span className="absolute right-[2px] bottom-0 font-['Liberation_Mono',monospace] text-[14px] tracking-[0.7px] whitespace-nowrap text-[#666]">UC爱好者论坛@FL706755</span>
    </div>;
}
